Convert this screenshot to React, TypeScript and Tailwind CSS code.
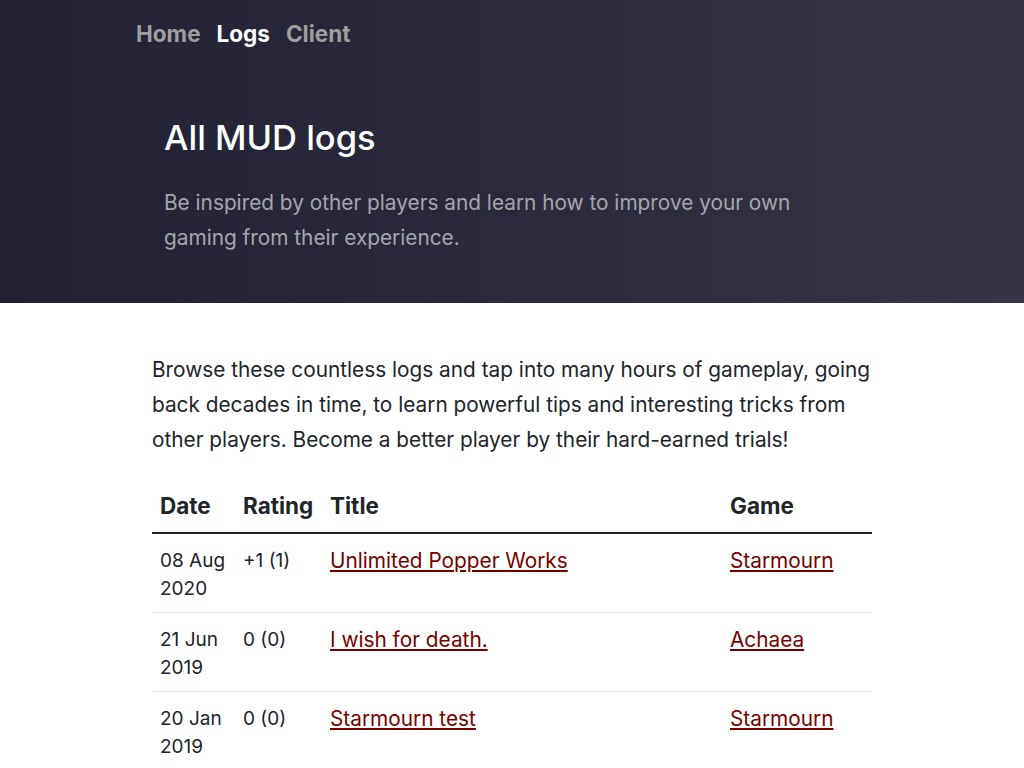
const logs = [
  { date: "08 Aug 2020", rating: "+1 (1)", title: "Unlimited Popper Works", game: "Starmourn" },
  { date: "21 Jun 2019", rating: "0 (0)", title: "I wish for death.", game: "Achaea" },
  { date: "20 Jan 2019", rating: "0 (0)", title: "Starmourn test", game: "Starmourn" },
];

const App = () => {
  return (
    <div className="min-h-screen bg-white font-['Inter',sans-serif] text-[#212529]">
      {/* HEADER */}
      <div className="h-[303px] bg-gradient-to-r from-[#222133] via-[#2a2a3c] to-[#363545]">
        <nav className="flex gap-[16px] pl-[136px] pt-[18px] text-[22.5px] font-bold leading-[32px]">
          <a className="text-[#9e9e9e]">Home</a>
          <a className="text-white">Logs</a>
          <a className="text-[#9e9e9e]">Client</a>
        </nav>
        <div className="pl-[164px] pt-[66px]">
          <h1 className="text-[34.5px] font-medium leading-[44px] text-white">All MUD logs</h1>
          <p className="mt-[25px] w-[640px] text-[20.8px] leading-[35px] text-[#a5a5ad]">
            Be inspired by other players and learn how to improve your own gaming from their experience.
          </p>
        </div>
      </div>
      {/* CONTENT */}
      <div className="ml-[152px] w-[720px] pt-[49px]">
        <p className="text-[20.8px] leading-[35px]">
          Browse these countless logs and tap into many hours of gameplay, going back decades in time, to learn
          powerful tips and interesting tricks from other players. Become a better player by their hard-earned trials!
        </p>
        <table className="mt-[24px] w-full table-fixed border-collapse text-left">
          <thead>
            <tr className="border-b-2 border-[#212529]">
              <th className="w-[83px] px-2 pb-[12px] pt-[11px] text-[22.5px] font-bold leading-[28px]">Date</th>
              <th className="w-[87px] px-2 pb-[12px] pt-[11px] text-[22.5px] font-bold leading-[28px]">Rating</th>
              <th className="w-[400px] px-2 pb-[12px] pt-[11px] text-[22.5px] font-bold leading-[28px]">Title</th>
              <th className="px-2 pb-[12px] pt-[11px] text-[22.5px] font-bold leading-[28px]">Game</th>
            </tr>
          </thead>
          <tbody>
            {logs.map((log) => (
              <tr key={log.title} className="border-b border-[#dee2e6] align-top">
                <td className="px-2 pb-[9px] pt-[13px] text-[19px] leading-[28px]">{log.date}</td>
                <td className="px-2 pb-[9px] pt-[13px] text-[19px] leading-[28px]">{log.rating}</td>
                <td className="px-2 pb-[9px] pt-[13px] text-[20.8px] leading-[28px]">
                  <a className="text-[#7a0000] underline">{log.title}</a>
                </td>
                <td className="px-2 pb-[9px] pt-[13px] text-[20.8px] leading-[28px]">
                  <a className="text-[#7a0000] underline">{log.game}</a>
                </td>
              </tr>
            ))}
          </tbody>
        </table>
      </div>
    </div>
  );
};

export default App;
